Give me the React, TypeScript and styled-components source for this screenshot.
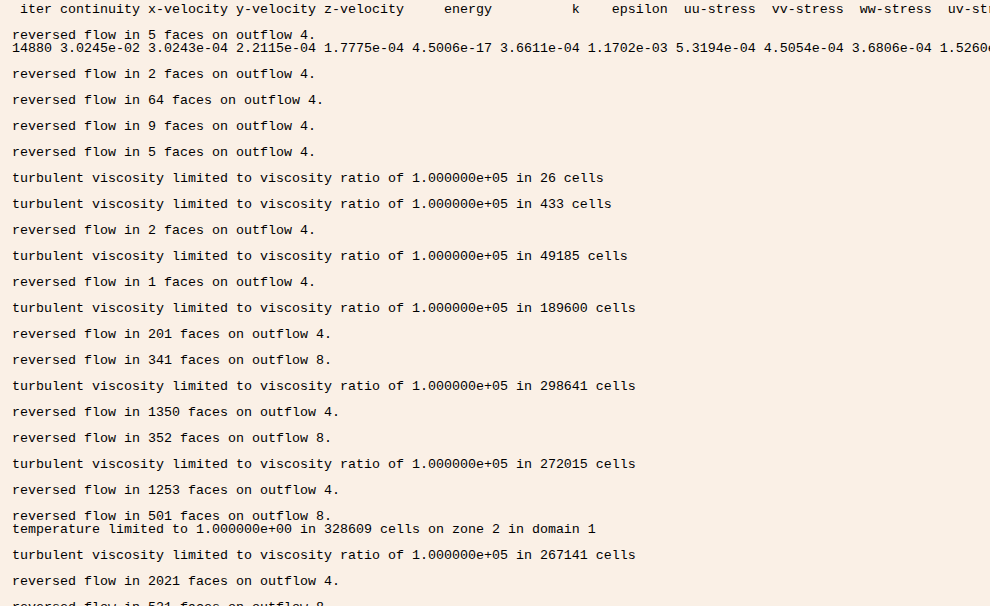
import React from "react";
import styled, { createGlobalStyle } from "styled-components";

const GlobalStyle = createGlobalStyle`
  html, body {
    margin: 0;
    padding: 0;
    background: #faf0e6;
    overflow: hidden;
  }
`;

const Console = styled.div`
  width: 990px;
  height: 606px;
  overflow: hidden;
  box-sizing: border-box;
  padding: 3px 0 0 12px;
  background: #faf0e6;
  color: #000000;
  font-family: "Liberation Mono", "DejaVu Sans Mono", monospace;
  font-size: 13.333px;
`;

const Line = styled.div`
  height: 13px;
  line-height: 13px;
  white-space: pre;
  overflow: visible;
`;

const col = (s: string) => s.padStart(11, " ");

const header =
  " iter" +
  [
    "continuity",
    "x-velocity",
    "y-velocity",
    "z-velocity",
    "energy",
    "k",
    "epsilon",
    " uu-stress",
    " vv-stress",
    " ww-stress",
    " uv-stress",
    " vw-stress",
    " uw-stress",
  ]
    .map(col)
    .join("") +
  "     time/iter";

const data =
  "14880 " +
  [
    "3.0245e-02",
    "3.0243e-04",
    "2.2115e-04",
    "1.7775e-04",
    "4.5006e-17",
    "3.6611e-04",
    "1.1702e-03",
    "5.3194e-04",
    "4.5054e-04",
    "3.6806e-04",
    "1.5260e-04",
    "2.1104e-05",
    "3.0876e-05",
  ].join(" ") +
  "  0:00:10 5000";

const rev = (n: number, o: number) =>
  `reversed flow in ${n} faces on outflow ${o}.`;
const turb = (n: number) =>
  `turbulent viscosity limited to viscosity ratio of 1.000000e+05 in ${n} cells`;

const lines: string[] = [
  header,
  "",
  rev(5, 4),
  data,
  "",
  rev(2, 4),
  "",
  rev(64, 4),
  "",
  rev(9, 4),
  "",
  rev(5, 4),
  "",
  turb(26),
  "",
  turb(433),
  "",
  rev(2, 4),
  "",
  turb(49185),
  "",
  rev(1, 4),
  "",
  turb(189600),
  "",
  rev(201, 4),
  "",
  rev(341, 8),
  "",
  turb(298641),
  "",
  rev(1350, 4),
  "",
  rev(352, 8),
  "",
  turb(272015),
  "",
  rev(1253, 4),
  "",
  rev(501, 8),
  "temperature limited to 1.000000e+00 in 328609 cells on zone 2 in domain 1",
  "",
  turb(267141),
  "",
  rev(2021, 4),
  "",
  rev(521, 8),
  "",
];

export default function App() {
  return (
    <>
      <GlobalStyle />
      <Console>
        {lines.map((text, i) => (
          <Line key={i}>{text}</Line>
        ))}
      </Console>
    </>
  );
}
